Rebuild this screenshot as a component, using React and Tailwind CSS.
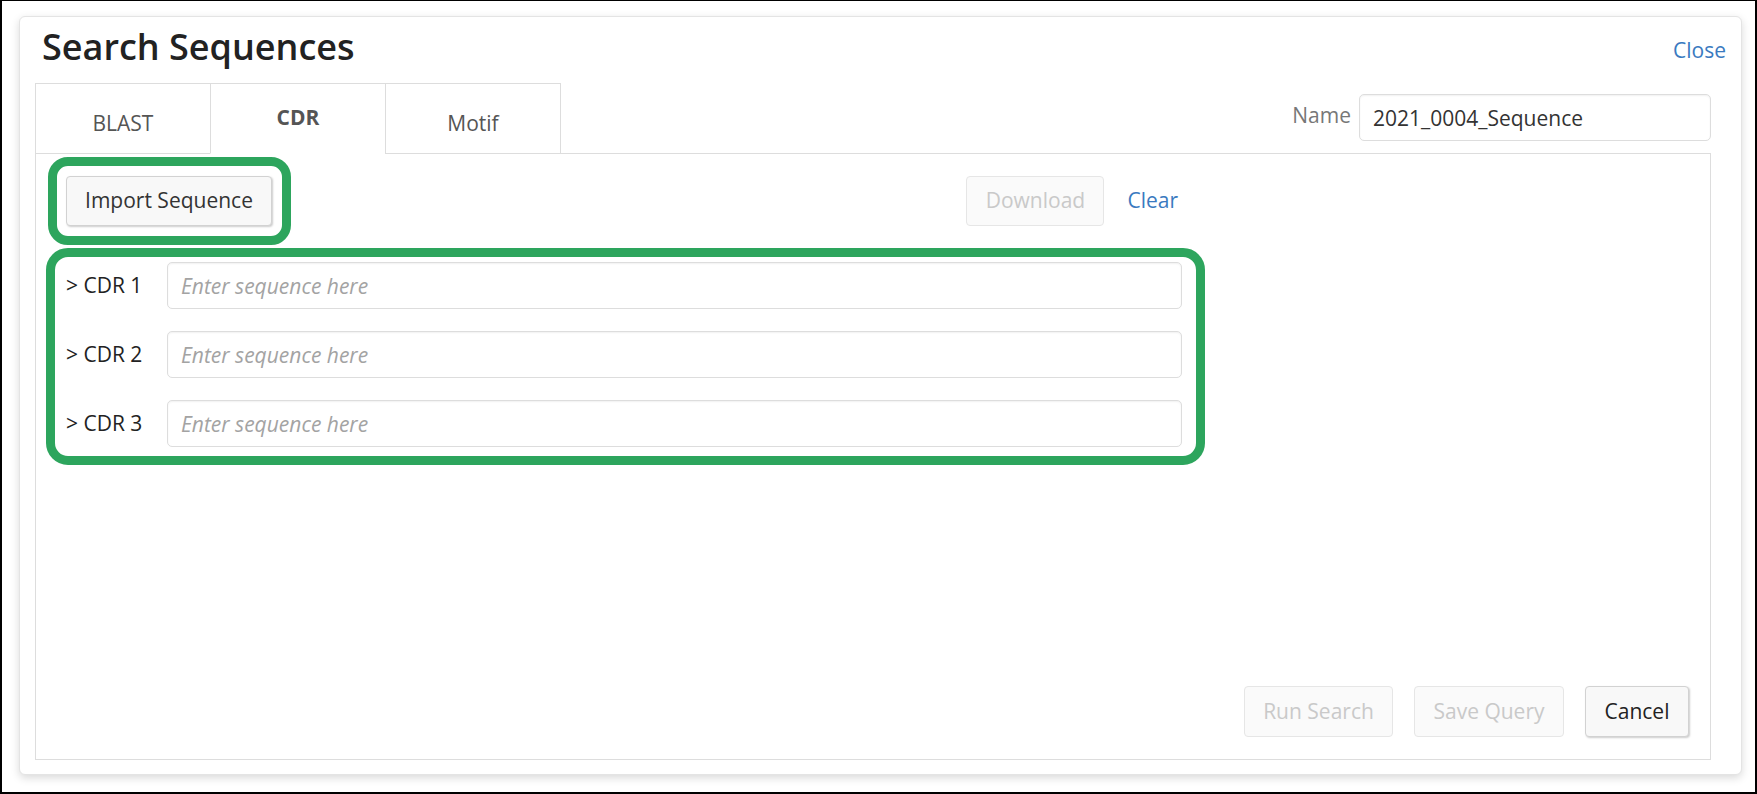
const tabs = [
  { label: "BLAST" },
  { label: "CDR", active: true },
  { label: "Motif" },
];

const cdrs = ["> CDR 1", "> CDR 2", "> CDR 3"];

export default function App() {
  return (
    <div className="h-[794px] w-full border-2 border-t border-black bg-white pl-[17px] pt-[15px] font-['Open_Sans',sans-serif] text-[21px] text-[#333]">
      <div className="flex h-[759px] w-[1723px] flex-col rounded-[6px] border border-[#e4e4e4] bg-white shadow-[0_3px_8px_rgba(0,0,0,0.15)]">
        {/* Header */}
        <div className="flex items-start justify-between pl-[22px] pr-[15px] pt-[10px]">
          <h1 className="text-[36px] font-semibold leading-[40px] text-[#222]">Search Sequences</h1>
          <a className="mt-[8px] cursor-pointer leading-[30px] text-[#3a7ac0]">Close</a>
        </div>

        {/* Body */}
        <div className="flex flex-col pl-[15px] pr-[30px] pt-[16px]">
          {/* Tabs + name */}
          <div className="relative z-10 flex items-start">
            {tabs.map((t, i) => (
              <div
                key={t.label}
                className={
                  (i > 0 ? "-ml-px " : "") +
                  (t.active
                    ? "h-[71px] w-[176px] border border-[#ddd] border-b-white bg-white pt-[18px] text-center font-bold leading-[30px] text-[#555]"
                    : "h-[71px] w-[176px] border border-[#ddd] bg-white pt-[24px] text-center leading-[30px] text-[#555]")
                }
              >
                {t.label}
              </div>
            ))}
            <div className="ml-auto mt-[11px] flex items-start">
              <span className="mr-[8px] mt-[6px] leading-[30px] text-[#777]">Name</span>
              <input
                defaultValue="2021_0004_Sequence"
                className="h-[47px] w-[352px] rounded-[5px] border border-[#ddd] px-[13px] text-[#333] shadow-[inset_0_1px_2px_rgba(0,0,0,0.06)] outline-none"
              />
            </div>
          </div>

          {/* Panel */}
          <div className="-mt-px flex h-[607px] flex-col border border-[#ddd]">
            <div className="ml-[12px] mt-[3px] flex w-[1130px] items-center justify-between">
              <div className="rounded-[20px] border-[9px] border-[#2da55d] py-[10px] pl-[9px] pr-[10px]">
                <button className="h-[50px] w-[206px] rounded-[4px] border border-[#d2d2d2] bg-[#f8f8f8] text-[#333] shadow-[1px_1px_2px_rgba(0,0,0,0.2)]">
                  Import Sequence
                </button>
              </div>
              <div className="flex items-center gap-[23px]">
                <button disabled className="h-[50px] w-[138px] rounded-[4px] border border-[#e6e6e6] bg-[#fafafa] text-[#c9c9c9]">
                  Download
                </button>
                <a className="cursor-pointer text-[#3a7ac0]">Clear</a>
              </div>
            </div>

            <div className="ml-[10px] mt-[3px] flex w-[1159px] flex-col gap-[22px] rounded-[22px] border-[9px] border-[#2da55d] pb-[9px] pl-[11px] pr-[14px] pt-[5px]">
              {cdrs.map((c) => (
                <div key={c} className="flex items-center">
                  <span className="w-[101px] text-[#222]">{c}</span>
                  <input
                    placeholder="Enter sequence here"
                    className="h-[47px] flex-1 rounded-[5px] border border-[#ddd] px-[13px] text-[#333] shadow-[inset_0_1px_2px_rgba(0,0,0,0.06)] outline-none placeholder:italic placeholder:text-[#a3a3a3]"
                  />
                </div>
              ))}
            </div>

            <div className="mt-auto flex justify-end gap-[21px] pb-[22px] pr-[21px]">
              <button disabled className="h-[51px] w-[149px] rounded-[4px] border border-[#e6e6e6] bg-[#fafafa] text-[#c9c9c9]">
                Run Search
              </button>
              <button disabled className="h-[51px] w-[150px] rounded-[4px] border border-[#e6e6e6] bg-[#fafafa] text-[#c9c9c9]">
                Save Query
              </button>
              <button className="h-[51px] w-[104px] rounded-[4px] border border-[#d2d2d2] bg-[#f8f8f8] text-[#222] shadow-[1px_1px_2px_rgba(0,0,0,0.2)]">
                Cancel
              </button>
            </div>
          </div>
        </div>
      </div>
    </div>
  );
}
